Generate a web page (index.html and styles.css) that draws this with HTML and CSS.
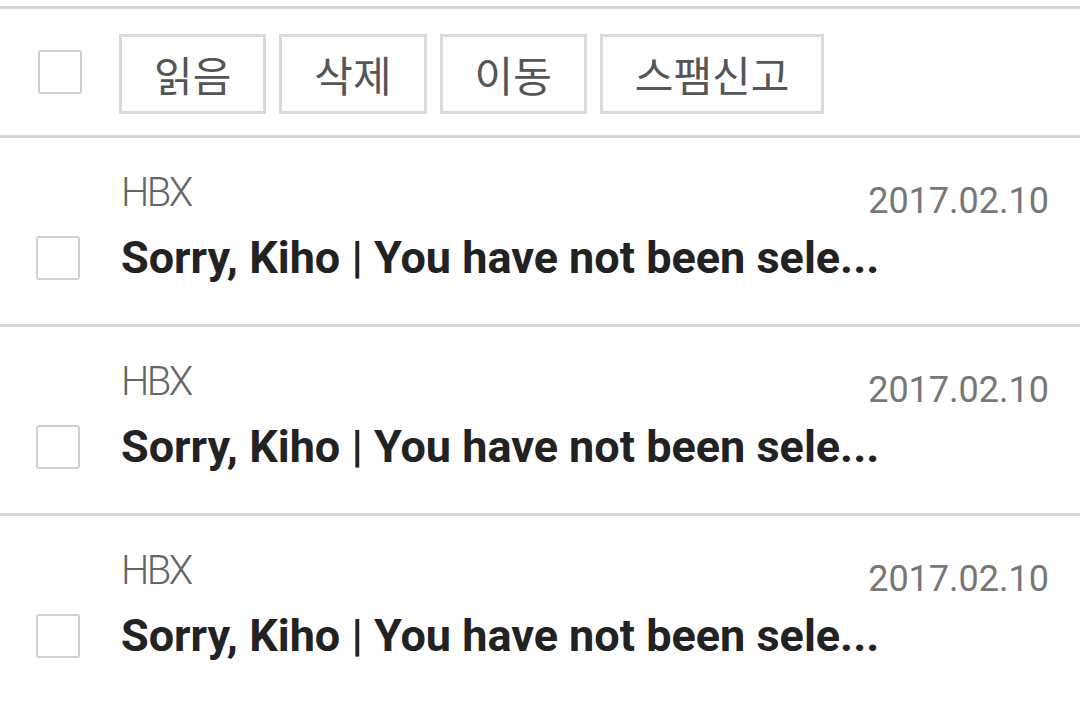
FILE: index.html
```html
<!DOCTYPE html>
<html lang="ko">

<head>
    <meta charset="UTF-8">
    <meta name="viewport" content="width=device-width, initial-scale=1.0">
    <title>메일함</title>
    <link rel="stylesheet" href="styles.css">
</head>

<body>
    <div class="mailbox">
        <div class="toolbar">
            <span class="check"></span>
            <div class="actions">
                <button class="btn">읽음</button>
                <button class="btn">삭제</button>
                <button class="btn">이동</button>
                <button class="btn">스팸신고</button>
            </div>
        </div>

        <div class="mail">
            <div class="meta">
                <span class="sender">HBX</span>
                <span class="date">2017.02.10</span>
            </div>
            <div class="line">
                <span class="check"></span>
                <span class="subject">Sorry, Kiho | You have not been sele...</span>
            </div>
        </div>

        <div class="mail">
            <div class="meta">
                <span class="sender">HBX</span>
                <span class="date">2017.02.10</span>
            </div>
            <div class="line">
                <span class="check"></span>
                <span class="subject">Sorry, Kiho | You have not been sele...</span>
            </div>
        </div>

        <div class="mail">
            <div class="meta">
                <span class="sender">HBX</span>
                <span class="date">2017.02.10</span>
            </div>
            <div class="line">
                <span class="check"></span>
                <span class="subject">Sorry, Kiho | You have not been sele...</span>
            </div>
        </div>
    </div>
</body>

</html>
```

FILE: styles.css
```css
body {
    margin: 0;
    padding-top: 6px;
    background: #fff;
    font-family: Roboto, "Noto Sans CJK KR", sans-serif;
}

.mailbox {
    border-top: 3px solid #d6d6d6;
}

.check {
    display: block;
    flex: none;
    width: 40px;
    height: 40px;
    border: 2px solid #d0d0d0;
    border-radius: 3px;
    background: #fff;
}

.toolbar {
    display: flex;
    align-items: center;
    height: 126px;
    padding-left: 38px;
    border-bottom: 3px solid #d6d6d6;
}

.actions {
    display: flex;
    gap: 13px;
    margin-left: 37px;
    margin-top: 4px;
}

.btn {
    height: 80px;
    padding: 0 32px;
    border: 3px solid #dadada;
    background: #fff;
    color: #555;
    font-family: "Noto Sans CJK KR", sans-serif;
    font-size: 42px;
    line-height: 1;
}

.mail {
    padding: 30px 31px 38px 36px;
    border-bottom: 3px solid #d6d6d6;
}

.meta {
    display: flex;
    justify-content: space-between;
    align-items: flex-start;
    padding-left: 85px;
    height: 50px;
}

.sender {
    font-size: 40px;
    font-weight: 300;
    line-height: 50px;
    color: #666;
    letter-spacing: -2.5px;
}

.date {
    margin-top: 8px;
    font-size: 36px;
    line-height: 50px;
    color: #777;
}

.line {
    display: flex;
    align-items: center;
    gap: 41px;
    margin-top: 12px;
    height: 56px;
}

.subject {
    font-size: 45px;
    font-weight: 700;
    line-height: 56px;
    color: #222;
    white-space: nowrap;
}
```
